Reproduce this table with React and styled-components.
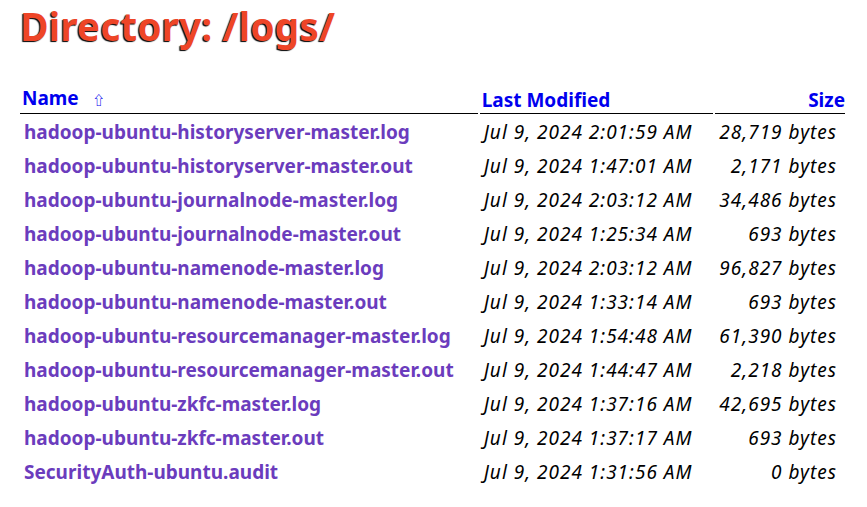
import React from 'react'
import styled, { createGlobalStyle } from 'styled-components'

const files = [
  { name: 'hadoop-ubuntu-historyserver-master.log', modified: 'Jul 9, 2024 2:01:59 AM', size: '28,719 bytes' },
  { name: 'hadoop-ubuntu-historyserver-master.out', modified: 'Jul 9, 2024 1:47:01 AM', size: '2,171 bytes' },
  { name: 'hadoop-ubuntu-journalnode-master.log', modified: 'Jul 9, 2024 2:03:12 AM', size: '34,486 bytes' },
  { name: 'hadoop-ubuntu-journalnode-master.out', modified: 'Jul 9, 2024 1:25:34 AM', size: '693 bytes' },
  { name: 'hadoop-ubuntu-namenode-master.log', modified: 'Jul 9, 2024 2:03:12 AM', size: '96,827 bytes' },
  { name: 'hadoop-ubuntu-namenode-master.out', modified: 'Jul 9, 2024 1:33:14 AM', size: '693 bytes' },
  { name: 'hadoop-ubuntu-resourcemanager-master.log', modified: 'Jul 9, 2024 1:54:48 AM', size: '61,390 bytes' },
  { name: 'hadoop-ubuntu-resourcemanager-master.out', modified: 'Jul 9, 2024 1:44:47 AM', size: '2,218 bytes' },
  { name: 'hadoop-ubuntu-zkfc-master.log', modified: 'Jul 9, 2024 1:37:16 AM', size: '42,695 bytes' },
  { name: 'hadoop-ubuntu-zkfc-master.out', modified: 'Jul 9, 2024 1:37:17 AM', size: '693 bytes' },
  { name: 'SecurityAuth-ubuntu.audit', modified: 'Jul 9, 2024 1:31:56 AM', size: '0 bytes' },
]

const GlobalStyle = createGlobalStyle`
  body {
    margin: 0;
    background: #fff;
    font-family: "Noto Sans", "Noto Sans CJK KR", sans-serif;
  }
`

const Page = styled.div`
  padding: 0 20px 0 18px;
`

const Title = styled.h1`
  margin: 0;
  padding: 2px 0 0 2px;
  height: 80px;
  box-sizing: border-box;
  font-size: 39px;
  line-height: 48px;
  font-weight: bold;
  color: #ee4527;
  text-shadow: #000 -1px 1px 1px;
`

const Listing = styled.table`
  width: 100%;
  border-spacing: 2px;
  margin-top: 5px;
`

const Head = styled.th`
  width: ${p => p.$width}px;
  padding: 0 ${p => (p.$align === 'right' ? 0 : 2)}px 1px;
  line-height: 22px;
  text-align: ${p => p.$align || 'left'};
  border-bottom: 1px solid #000;
  font-size: 19px;

  a {
    color: #0000ee;
    text-decoration: none;
    font-weight: bold;
  }
`

const Arrow = styled.span`
  margin-left: 14px;
  font-size: 12px;
  color: #0000ee;
`

const Cell = styled.td`
  height: 32px;
  padding: 0 ${p => (p.$align === 'right' ? 8 : 3)}px 0 4px;
  font-size: 19px;
  font-style: ${p => (p.$link ? 'normal' : 'italic')};
  letter-spacing: ${p => (p.$link ? 0 : 1)}px;
  text-align: ${p => p.$align || 'left'};
  white-space: nowrap;
  color: #000;

  a {
    color: #6b3cbd;
    font-weight: bold;
    text-decoration: none;
  }
`

export default function App() {
  return (
    <>
      <GlobalStyle />
      <Page>
        <Title>Directory: /logs/</Title>
        <Listing>
          <thead>
            <tr>
              <Head $width={460}><a href="#">Name</a><Arrow>⇧</Arrow></Head>
              <Head $width={235}><a href="#">Last Modified</a></Head>
              <Head $width={126} $align="right"><a href="#">Size</a></Head>
            </tr>
          </thead>
          <tbody>
            {files.map(f => (
              <tr key={f.name}>
                <Cell $link><a href="#">{f.name}</a></Cell>
                <Cell>{f.modified}</Cell>
                <Cell $align="right">{f.size}</Cell>
              </tr>
            ))}
          </tbody>
        </Listing>
      </Page>
    </>
  )
}
